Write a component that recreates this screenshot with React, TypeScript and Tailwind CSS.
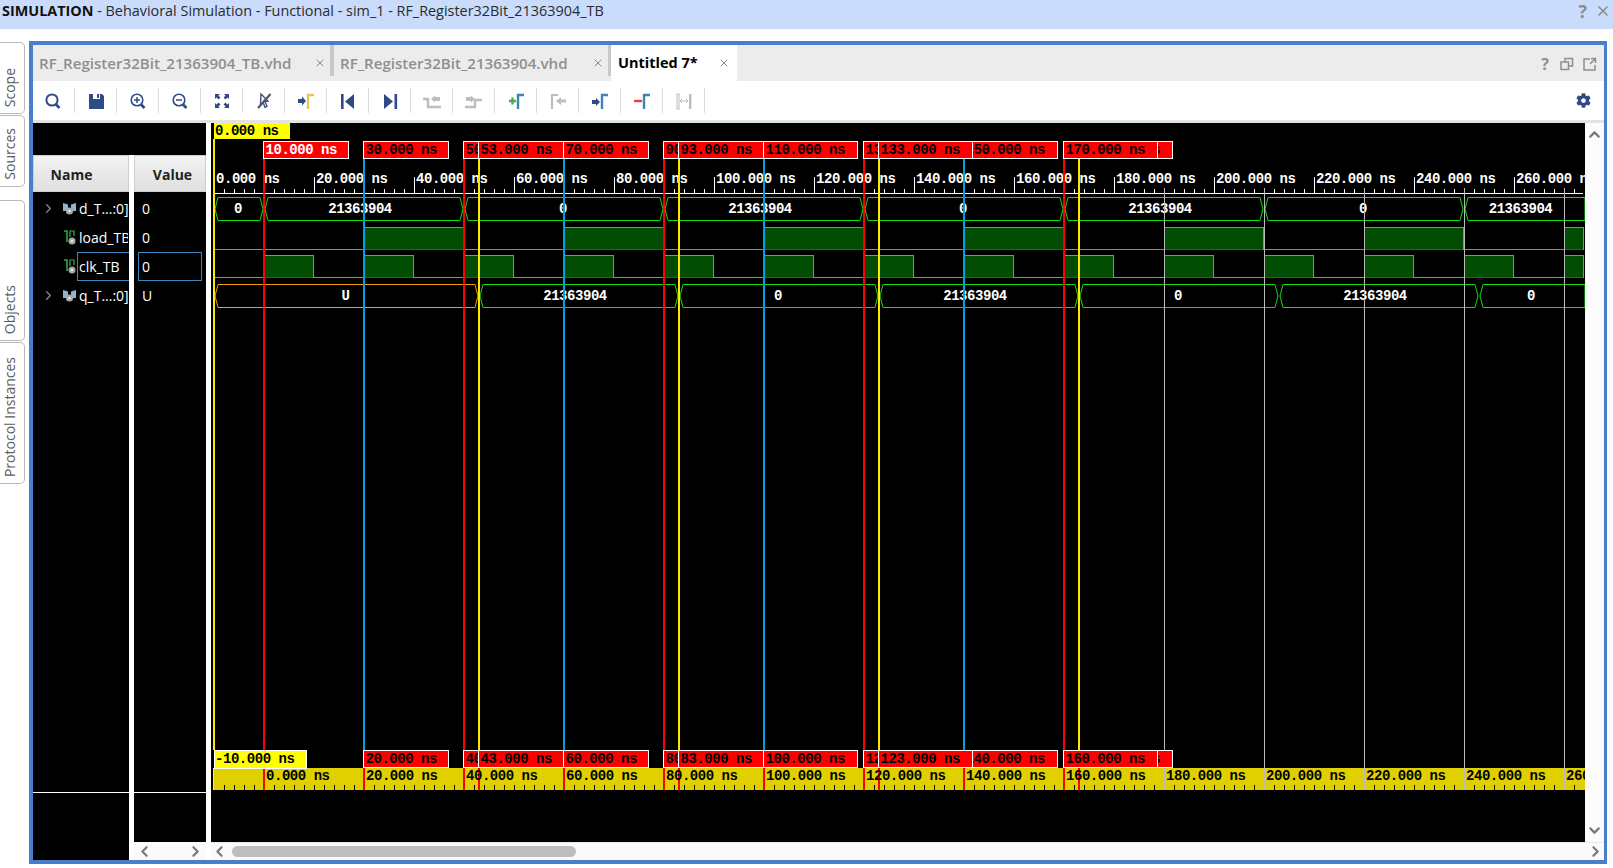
import type { ReactNode } from "react";
import { ChevronDown, ChevronLeft, ChevronRight, ChevronUp, X } from "lucide-react";
import { FaCog } from "react-icons/fa";

const CANVAS_W = 1374;
const CANVAS_H = 719;
const NAVY = "#2f4b87";
const BLUE = "#3f83b8";
const AMBER = "#e6c65c";
const GRAY = "#bdbdbd";

// canvas x for a time in ns (canvas starts at page x=211, 5px per ns)
const tx = (t: number) => 3 + t * 5;

type Marker = { at: number; text: string; hot?: boolean };

// order matters, later boxes cover earlier ones
const topMarkers: Marker[] = [
  { at: 10, text: "10.000 ns", hot: true },
  { at: 30, text: "30.000 ns" },
  { at: 50, text: "50.000 ns" },
  { at: 53, text: "53.000 ns" },
  { at: 70, text: "70.000 ns" },
  { at: 90, text: "90.000 ns" },
  { at: 93, text: "93.000 ns" },
  { at: 110, text: "110.000 ns" },
  { at: 130, text: "130.000 ns" },
  { at: 150, text: "150.000 ns" },
  { at: 133, text: "133.000 ns" },
  { at: 173, text: "173.000 ns" },
  { at: 170, text: "170.000 ns" },
];

const bottomMarkers: Marker[] = [
  { at: 30, text: "20.000 ns" },
  { at: 50, text: "40.000 ns" },
  { at: 53, text: "43.000 ns" },
  { at: 70, text: "60.000 ns" },
  { at: 90, text: "80.000 ns" },
  { at: 93, text: "83.000 ns" },
  { at: 110, text: "100.000 ns" },
  { at: 130, text: "120.000 ns" },
  { at: 150, text: "140.000 ns" },
  { at: 133, text: "123.000 ns" },
  { at: 173, text: "163.000 ns" },
  { at: 170, text: "160.000 ns" },
];

const labelWidth = (text: string) => (text.length === 10 ? 95 : 86);

function MarkerBox({ m, y, h, base }: { m: Marker; y: number; h: number; base: number }) {
  const x = tx(m.at) - 1;
  const w = labelWidth(m.text);
  return (
    <g>
      <rect x={x + 0.5} y={y + 0.5} width={w - 1} height={h - 1} fill="#ff0000" stroke="#ffffff" shapeRendering="crispEdges" />
      <svg x={x + 1} y={y + 1} width={w - 2} height={h - 2}>
        <text x={1.5} y={base - y - 1} fill={m.hot ? "#ffffff" : "#000000"}>
          {m.text}
        </text>
      </svg>
    </g>
  );
}

function BusShape({ from, to, text, color, top = 0 }: { from: number; to: number; text: string; color: string; top?: number }) {
  const x1 = from + 1;
  const x2 = to - 1;
  const open = to >= CANVAS_W;
  const pts = open
    ? `${CANVAS_W},${top} ${x1 + 3},${top} ${x1},${top + 11.5} ${x1 + 3},${top + 23} ${CANVAS_W},${top + 23}`
    : `${x1 + 3},${top} ${x2 - 3},${top} ${x2},${top + 11.5} ${x2 - 3},${top + 23} ${x1 + 3},${top + 23} ${x1},${top + 11.5}`;
  const center = (from + to) / 2 - (text.length > 1 ? 4 : 1);
  return (
    <g>
      <polygon points={pts} fill="none" stroke={color} strokeWidth="1" />
      <text x={center} y={top + 15} textAnchor="middle" fill="#ffffff">
        {text}
      </text>
    </g>
  );
}

function BitRow({ y, highs }: { y: number; highs: number[][] }) {
  return (
    <g shapeRendering="crispEdges">
      <rect x={3} y={y + 22} width={CANVAS_W - 5} height={1} fill="#12e012" />
      {highs.map(([a, b]) => {
        const x1 = tx(a);
        const x2 = Math.min(tx(b), CANVAS_W - 1);
        return (
          <g key={a}>
            <rect x={x1} y={y} width={x2 - x1} height={23} fill="#034c03" />
            <rect x={x1} y={y} width={x2 - x1} height={1} fill="#12e012" />
            <rect x={x1} y={y + 22} width={x2 - x1} height={1} fill="#0a7a0a" />
            <rect x={x2 - 1} y={y} width={1} height={23} fill="#12e012" />
          </g>
        );
      })}
    </g>
  );
}

const range = (start: number, stop: number, step: number) => {
  const out: number[] = [];
  for (let v = start; v <= stop; v += step) out.push(v);
  return out;
};

function Waveform() {
  const clkHighs = range(10, 270, 20).map((t) => [t, t + 10]);
  const loadHighs = range(30, 270, 40).map((t) => [t, t + 20]);
  const redAt = [10, 50, 90, 130, 170];
  const blueAt = [30, 70, 110, 150];
  const yellowAt = [53, 93, 133, 173];
  const grayAt = [190, 210, 230, 250, 270];
  const dValues = ["0", "21363904", "0", "21363904", "0", "21363904", "0", "21363904"];
  const dEdges = [0, 10, 50, 90, 130, 170, 210, 250, 300];
  const qValues = ["21363904", "0", "21363904", "0", "21363904", "0"];
  const qEdges = [53, 93, 133, 173, 213, 253, 300];

  return (
    <svg
      width={CANVAS_W}
      height={CANVAS_H}
      className="block shrink-0 bg-black font-['Liberation_Mono',monospace] text-[14px] font-bold tracking-[-0.46px]"
    >
      {/* top ruler */}
      <g shapeRendering="crispEdges">
        <rect x={3} y={70} width={CANVAS_W - 5} height={1} fill="#ffffff" />
        {range(13, CANVAS_W - 2, 10).map((x) => (
          <rect key={x} x={x} y={66} width={1} height={4} fill="#ffffff" />
        ))}
        {range(0, 260, 20).map((t) => (
          <rect key={t} x={tx(t)} y={54} width={1} height={16} fill="#ffffff" />
        ))}
      </g>
      {range(0, 260, 20).map((t) => (
        <text key={t} x={tx(t) + 2} y={60} fill="#ffffff">
          {t}.000 ns
        </text>
      ))}

      {/* signals */}
      {dValues.map((v, i) => (
        <BusShape
          key={i}
          from={tx(dEdges[i])}
          to={Math.min(tx(dEdges[i + 1]), CANVAS_W)}
          text={v}
          color="#12e012"
          top={74.5}
        />
      ))}
      <BitRow y={104} highs={loadHighs} />
      <BitRow y={132} highs={clkHighs} />
      <BusShape from={tx(0)} to={tx(53)} text="U" color="#f0a000" top={161.5} />
      {qValues.map((v, i) => (
        <BusShape
          key={i}
          from={tx(qEdges[i])}
          to={Math.min(tx(qEdges[i + 1]), CANVAS_W)}
          text={v}
          color="#12e012"
          top={161.5}
        />
      ))}

      {/* cursors */}
      <g shapeRendering="crispEdges">
        {grayAt.map((t) => (
          <rect key={t} x={tx(t)} y={65} width={1} height={585} fill="#bbbbbb" />
        ))}
        <rect x={2} y={16} width={2} height={611} fill="#ffe800" />
        {redAt.map((t) => (
          <rect key={t} x={tx(t) - 1} y={36} width={2} height={591} fill="#ff0000" />
        ))}
        {blueAt.map((t) => (
          <rect key={t} x={tx(t) - 1} y={36} width={2} height={591} fill="#00a0e0" />
        ))}
        {yellowAt.map((t) => (
          <rect key={t} x={tx(t) - 1} y={36} width={2} height={591} fill="#ffe800" />
        ))}
      </g>

      {/* top labels */}
      <rect x={3} y={0} width={76} height={16} fill="#ffff00" shapeRendering="crispEdges" />
      <text x={4} y={12} fill="#000000">
        0.000 ns
      </text>
      {topMarkers.map((m) => (
        <MarkerBox key={m.text} m={m} y={18} h={18} base={31} />
      ))}

      {/* bottom ruler */}
      <g shapeRendering="crispEdges">
        <rect x={2} y={645} width={CANVAS_W - 2} height={22} fill="#e0d000" />
        {range(13, CANVAS_W - 2, 10).map((x) => (
          <rect key={x} x={x} y={662} width={1} height={5} fill="#000000" />
        ))}
        <rect x={2} y={645} width={1} height={22} fill="#ffff00" />
        {[10, 30, 50, 53, 70, 90, 93, 110, 130, 133, 150, 170, 173].map((t) => (
          <rect key={t} x={tx(t) - 1} y={645} width={2} height={22} fill="#ff0000" />
        ))}
        {grayAt.map((t) => (
          <rect key={t} x={tx(t)} y={645} width={1} height={22} fill="#bbbbbb" />
        ))}
      </g>
      {range(0, 260, 20).map((t) => (
        <text key={t} x={tx(t + 10) + 2} y={657} fill="#000000">
          {t}.000 ns
        </text>
      ))}
      <rect x={3} y={627} width={92} height={18} fill="#ffff00" stroke="#ffffff" shapeRendering="crispEdges" />
      <text x={4} y={640} fill="#000000">
        -10.000 ns
      </text>
      {bottomMarkers.map((m) => (
        <MarkerBox key={m.text} m={m} y={627} h={18} base={640} />
      ))}
    </svg>
  );
}

function Ico({ children }: { children: ReactNode }) {
  return (
    <svg width="20" height="20" viewBox="0 0 20 20" fill="none">
      {children}
    </svg>
  );
}

const Step = ({ color, x = 12 }: { color: string; x?: number }) => (
  <path d={`M${x} 18V4h6`} stroke={color} strokeWidth="2.4" />
);

const toolIcons: ReactNode[] = [
  <Ico>
    <circle cx="8" cy="9" r="5.6" stroke={NAVY} strokeWidth="2" />
    <path d="M12 13.5l3.5 3.5" stroke={NAVY} strokeWidth="2.6" />
  </Ico>,
  <Ico>
    <path d="M3 3h13l2 2v13H3z" fill={NAVY} />
    <rect x="7" y="3" width="7" height="5" fill="#ffffff" />
    <rect x="11" y="3" width="2" height="4" fill={NAVY} />
  </Ico>,
  <Ico>
    <circle cx="9" cy="9" r="5.8" stroke={NAVY} strokeWidth="1.6" />
    <path d="M6 9h6M9 6v6" stroke={NAVY} strokeWidth="1.5" />
    <path d="M13 13.5l3.5 3.5" stroke={NAVY} strokeWidth="2.6" />
  </Ico>,
  <Ico>
    <circle cx="9" cy="9" r="5.8" stroke={NAVY} strokeWidth="1.6" />
    <path d="M6 9h6" stroke={NAVY} strokeWidth="1.5" />
    <path d="M13 13.5l3.5 3.5" stroke={NAVY} strokeWidth="2.6" />
  </Ico>,
  <Ico>
    <path
      d="M3 3h5L6.4 4.6 8.4 6.6 6.6 8.4 4.6 6.4 3 8zM17 3h-5l1.6 1.6-2 2 1.8 1.8 2-2L17 8zM3 17h5l-1.6-1.6 2-2-1.8-1.8-2 2L3 12zM17 17h-5l1.6-1.6-2-2 1.8-1.8 2 2L17 12z"
      fill={NAVY}
    />
  </Ico>,
  <Ico>
    <path d="M7 3l7 7-3 .5 2 5-2 .8-2-5-2.5 2z" stroke={NAVY} strokeWidth="1.3" />
    <path d="M16.5 3L4 17" stroke="#555555" strokeWidth="2.2" />
  </Ico>,
  <Ico>
    <path d="M2 8h4V5.500l4 4.500-4 4.500V12H2z" fill={NAVY} />
    <Step color={AMBER} />
  </Ico>,
  <Ico>
    <rect x="3" y="3" width="2.6" height="15" fill={NAVY} />
    <path d="M16 3v15L7 10.500z" fill={NAVY} />
  </Ico>,
  <Ico>
    <rect x="14.500" y="3" width="2.6" height="15" fill={NAVY} />
    <path d="M4 3v15l9-7.500z" fill={NAVY} />
  </Ico>,
  <Ico>
    <path d="M1 8h5v8h13" stroke={GRAY} strokeWidth="2.4" />
    <path d="M9 8l4-3.500V6h5v4h-5v1.500z" fill={GRAY} />
  </Ico>,
  <Ico>
    <path d="M1 16h10V9h7" stroke={GRAY} strokeWidth="2.4" />
    <path d="M2 6h5V4.500L11 8l-4 3.500V10H2z" fill={GRAY} />
  </Ico>,
  <Ico>
    <path d="M3 10h7M6.500 6.500v7" stroke="#3fb54a" strokeWidth="2.4" />
    <Step color={BLUE} />
  </Ico>,
  <Ico>
    <path d="M4 18V4h6" stroke={GRAY} strokeWidth="2.2" />
    <path d="M8 10l5-4v2.500h5v3h-5V14z" fill={GRAY} />
  </Ico>,
  <Ico>
    <path d="M2 9h4V7l4 4-4 4v-2H2z" fill={NAVY} />
    <Step color={BLUE} />
  </Ico>,
  <Ico>
    <path d="M2 10h8" stroke="#ee3b3b" strokeWidth="2.4" />
    <Step color={BLUE} />
  </Ico>,
  <Ico>
    <rect x="3" y="3" width="2" height="15" stroke={GRAY} strokeWidth="1" />
    <rect x="15" y="3" width="2.400" height="15" fill={GRAY} />
    <path d="M6 10h8M8 8l-2 2 2 2M12 8l2 2-2 2" stroke={GRAY} strokeWidth="1" />
  </Ico>,
];

function SideTab({ label, height, gap = 0 }: { label: string; height: number; gap?: number }) {
  return (
    <div
      className="w-[25px] flex flex-col items-center justify-end pb-[6px] bg-white border border-l-0 border-[#b9b9b9] rounded-r-[5px]"
      style={{ height, marginTop: gap }}
    >
      <span className="[writing-mode:vertical-rl] rotate-180 text-[14px] leading-none text-[#5c5c5c] mr-[4px]">{label}</span>
    </div>
  );
}

function BusIcon() {
  return (
    <svg width="15" height="14" viewBox="0 0 15 14">
      <path d="M1 1l5 1.500V9H1zM14 1L9 2.500V9h5z" fill="#8db4d0" />
      <circle cx="7.500" cy="9" r="3.600" fill="#a8a8a8" />
      <circle cx="7.500" cy="9" r="1.300" fill="#e8e8e8" />
    </svg>
  );
}

function BitIcon() {
  return (
    <svg width="15" height="16" viewBox="0 0 15 16">
      <path d="M2 1h3v11" stroke="#35b04a" strokeWidth="1.500" fill="none" />
      <path d="M8 7V1h4v5" stroke="#35b04a" strokeWidth="1.200" fill="none" />
      <circle cx="10" cy="11" r="3.500" fill="#a8a8a8" />
      <circle cx="10" cy="11" r="1.300" fill="#e8e8e8" />
    </svg>
  );
}

function NameRow({ name, bus, active }: { name: string; bus?: boolean; active?: boolean }) {
  return (
    <div className="h-[29px] flex items-center text-white overflow-hidden">
      <span className="w-[28px] flex justify-end shrink-0 pr-[5px]">
        {bus && <ChevronRight size={15} strokeWidth={2} className="text-[#8a8a8a]" />}
      </span>
      <span className="w-[16px] shrink-0 flex justify-center">{bus ? <BusIcon /> : <BitIcon />}</span>
      <span
        className={`h-[29px] flex-1 flex items-center pl-[1px] whitespace-nowrap overflow-hidden ${
          active ? "border border-r-0 border-[#3f87bd]" : "border border-transparent"
        }`}
      >
        {name}
      </span>
    </div>
  );
}

function ValueRow({ value, active }: { value: string; active?: boolean }) {
  return (
    <div className="h-[29px] flex items-center pl-[4px] text-white">
      <span
        className={`h-[29px] w-[64px] flex items-center pl-[3px] ${
          active ? "border border-[#3f87bd]" : "border border-transparent"
        }`}
      >
        {value}
      </span>
    </div>
  );
}

function ColumnHeader({ label, className }: { label: string; className: string }) {
  return (
    <div
      className={`h-[37px] flex items-center justify-center pt-[1px] bg-linear-to-b from-[#f3f3f3] to-[#dfdfdf] border border-[#cfcfcf] text-[14px] font-bold text-[#222222] ${className}`}
    >
      {label}
    </div>
  );
}

function Tab({ label, width, active }: { label: string; width: number; active?: boolean }) {
  return (
    <div
      className={`h-[36px] flex items-center justify-between shrink-0 ${
        active
          ? "bg-white text-black pl-[7px] pr-[6px] text-[14.5px] font-bold"
          : "text-[#8f8f8f] pl-[6px] pr-[3px] text-[15.1px] font-semibold"
      }`}
      style={{ width }}
    >
      <span className="whitespace-nowrap">{label}</span>
      <X size={12} strokeWidth={2} className="text-[#8a8a8a] shrink-0 mr-[1px]" />
    </div>
  );
}

export default function App() {
  return (
    <div className="w-[1613px] h-[868px] flex flex-col overflow-hidden bg-white font-['Open_Sans',sans-serif]">
      <div className="h-[29px] shrink-0 bg-[#c9dcfb] flex items-center pl-[2px] pb-[8px] text-[14.4px] text-[#2b2b2b]">
        <span className="font-bold text-[#111111]">SIMULATION</span>
        <span>&nbsp;- Behavioral Simulation - Functional - sim_1 - RF_Register32Bit_21363904_TB</span>
        <div className="ml-auto flex items-center gap-[8px] pr-[2px] text-[#8c8c8c]">
          <span className="text-[18px] font-bold leading-none">?</span>
          <X size={16} strokeWidth={2.4} />
        </div>
      </div>

      <div className="flex flex-1 pt-[12px]">
        <div className="w-[29px] shrink-0 flex flex-col pt-[1px]">
          <SideTab label="Scope" height={72} />
          <SideTab label="Sources" height={72} gap={1} />
          <SideTab label="Objects" height={141} gap={13} />
          <SideTab label="Protocol Instances" height={142} gap={1} />
        </div>

        <div className="w-[1578px] h-[823px] border-4 border-[#4a7dcc] border-r-[3px] flex flex-col">
          <div className="h-[36px] shrink-0 bg-[#ececec] flex items-stretch">
            <Tab label="RF_Register32Bit_21363904_TB.vhd" width={297} />
            <div className="w-[4px] h-[31px] bg-[#c8c8c8] shrink-0" />
            <Tab label="RF_Register32Bit_21363904.vhd" width={274} />
            <div className="w-[3px] h-[31px] bg-[#c8c8c8] shrink-0" />
            <Tab label="Untitled 7*" width={126} active />
            <div className="ml-auto flex items-center gap-[8px] pr-[7px] pt-[2px] text-[#8f8f8f]">
              <span className="text-[16px] font-bold leading-none mr-[3px]">?</span>
              <svg width="14" height="14" viewBox="0 0 14 14" fill="none" stroke="#8f8f8f" strokeWidth="1.500">
                <rect x="1" y="5" width="7.500" height="7.500" />
                <path d="M5 5V1.500h7.500V9H8.500" />
              </svg>
              <svg width="15" height="15" viewBox="0 0 15 15" fill="none" stroke="#8f8f8f" strokeWidth="1.500">
                <path d="M8 2H2v11h11V8M8 7l5-5M9 1.500h4.500V6" />
              </svg>
            </div>
          </div>

          <div className="h-[39px] shrink-0 bg-white flex items-center">
            {toolIcons.map((icon, i) => (
              <div
                key={i}
                className="w-[42px] h-[25px] shrink-0 flex items-center justify-center border-r border-[#dddddd]"
              >
                {icon}
              </div>
            ))}
            <FaCog size={15} color={NAVY} className="ml-auto mr-[13px]" />
          </div>
          <div className="h-[3px] shrink-0 bg-[#e2e2e2]" />

          <div className="flex-1 flex min-h-0 text-[14px]">
            <div className="w-[173px] shrink-0 flex flex-col">
              <div className="h-[32px] shrink-0 bg-black" />
              <div className="flex-1 flex justify-between min-h-0">
                <div className="w-[96px] flex flex-col bg-black">
                  <ColumnHeader label="Name" className="pr-[19px]" />
                  <div className="pt-[2px]">
                    <NameRow name="d_T...:0]" bus />
                    <NameRow name="load_TB" />
                    <NameRow name="clk_TB" active />
                    <NameRow name="q_T...:0]" bus />
                  </div>
                  <div className="mt-auto h-[68px] border-t border-white" />
                </div>
                <div className="w-[72px] flex flex-col bg-black">
                  <ColumnHeader label="Value" className="pl-[5px]" />
                  <div className="pt-[2px]">
                    <ValueRow value="0" />
                    <ValueRow value="0" />
                    <ValueRow value="0" active />
                    <ValueRow value="U" />
                  </div>
                  <div className="mt-auto h-[50px] border-t border-white" />
                  <div className="h-[18px] shrink-0 bg-[#fafafa] flex items-center justify-between px-[2px] text-[#777777]">
                    <ChevronLeft size={17} strokeWidth={3} />
                    <ChevronRight size={17} strokeWidth={3} />
                  </div>
                </div>
              </div>
            </div>
            <div className="w-[5px] shrink-0" />
            <div className="flex-1 flex flex-col min-w-0">
              <div className="h-[719px] shrink-0 flex">
                <Waveform />
                <div className="flex-1 bg-[#fbfbfb] flex flex-col items-center justify-between py-[3px] text-[#777777]">
                  <ChevronUp size={17} strokeWidth={3} />
                  <ChevronDown size={17} strokeWidth={3} />
                </div>
              </div>
              <div className="h-[18px] shrink-0 bg-[#fafafa] border-t border-[#e8e8e8] flex items-center text-[#777777]">
                <ChevronLeft size={17} strokeWidth={3} className="shrink-0" />
                <div className="ml-[4px] w-[344px] h-[11px] rounded-full bg-[#bdbdbd]" />
                <ChevronRight size={17} strokeWidth={3} className="shrink-0 ml-auto" />
              </div>
            </div>
          </div>
        </div>
      </div>
    </div>
  );
}
